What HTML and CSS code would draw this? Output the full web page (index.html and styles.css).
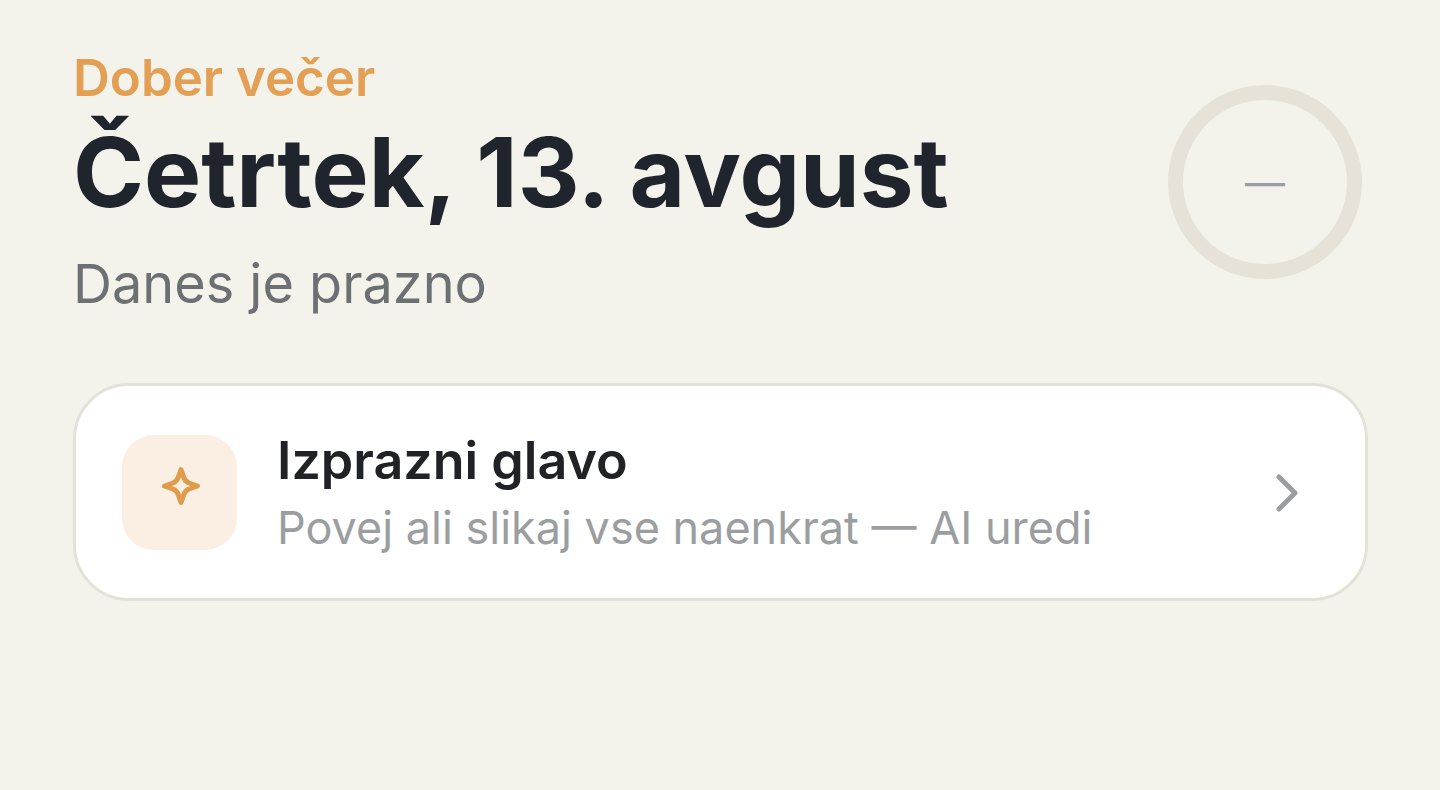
FILE: index.html
```html
<!DOCTYPE html>
<html lang="sl">
<head>
    <meta charset="UTF-8">
    <meta name="viewport" content="width=device-width, initial-scale=1.0">
    <title>Danes</title>
    <link rel="stylesheet" href="styles.css">
</head>
<body>
    <main class="page">
        <header class="hero">
            <div class="hero-text">
                <p class="greeting">Dober večer</p>
                <h1>Četrtek, 13. avgust</h1>
                <p class="summary">Danes je prazno</p>
            </div>
            <div class="progress">—</div>
        </header>
        <button class="card" type="button">
            <span class="card-icon">
                <svg width="44" height="44" viewBox="0 0 44 44" fill="none" stroke="#e09c4b" stroke-width="5" stroke-linejoin="round">
                    <path d="M23 5.500 L26 14 Q27.500 17.500 31 19 L39.500 22 L31 25 Q27.500 26.500 26 30 L23 38.500 L20 30 Q18.500 26.500 15 25 L6.500 22 L15 19 Q18.500 17.500 20 14 Z"/>
                </svg>
            </span>
            <span class="card-text">
                <span class="card-title">Izprazni glavo</span>
                <span class="card-desc">Povej ali slikaj vse naenkrat — AI uredi</span>
            </span>
            <svg class="chevron" width="24" height="40" viewBox="0 0 24 40" fill="none" stroke="#9b9ea1" stroke-width="5" stroke-linecap="round" stroke-linejoin="round">
                <path d="M4 5 L20 21 L4 37"/>
            </svg>
        </button>
    </main>
</body>
</html>
```
FILE: styles.css
```css
* {
    box-sizing: border-box;
}

body {
    margin: 0;
    background-color: #f3f3eb;
    color: #20252d;
    font-family: Inter, sans-serif;
}

.page {
    padding: 48px 72px 48px 73px;
}

.hero {
    display: flex;
    justify-content: space-between;
    align-items: flex-start;
    padding-right: 6px;
    margin-bottom: 59px;
}

.greeting,
.summary,
h1 {
    margin: 0;
}

.greeting {
    color: #e3a055;
    font-size: 51px;
    font-weight: 600;
    line-height: 60px;
}

h1 {
    margin-bottom: 8px;
    font-size: 96px;
    font-weight: 700;
    line-height: 128px;
}

.summary {
    color: #6c7073;
    font-size: 54px;
    line-height: 80px;
}

.progress {
    display: flex;
    justify-content: center;
    align-items: center;
    width: 194px;
    height: 194px;
    margin-top: 37px;
    border: 15px solid #e6e2d7;
    border-radius: 50%;
    color: #9a9ca6;
    font-size: 40px;
}

.card {
    display: flex;
    align-items: center;
    gap: 40px;
    width: 100%;
    padding: 39px 66px 39px 46px;
    background-color: #ffffff;
    border: 3px solid #e4e2d8;
    border-radius: 56px;
    color: #202226;
    font-family: inherit;
    text-align: left;
    cursor: pointer;
}

.card-icon {
    display: flex;
    justify-content: center;
    padding-top: 29px;
    width: 115px;
    height: 115px;
    background-color: #fbeee2;
    border-radius: 32px;
}

.card-text {
    display: flex;
    flex: 1;
    flex-direction: column;
    gap: 6px;
    padding-top: 6px;
}

.card-title {
    font-size: 52px;
    font-weight: 600;
    line-height: 60px;
}

.card-desc {
    color: #9b9ea1;
    font-size: 45px;
    line-height: 62px;
}
```
